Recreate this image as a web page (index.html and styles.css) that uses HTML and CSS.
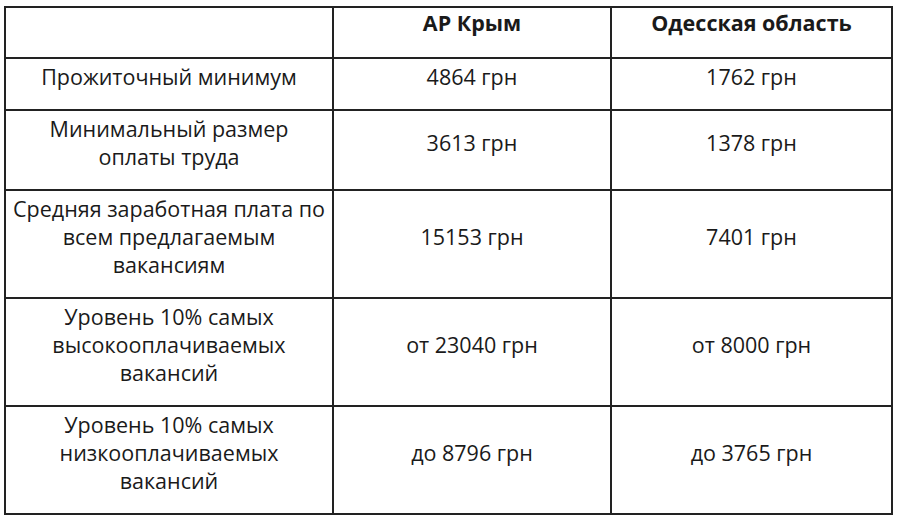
FILE: index.html
```html
<!DOCTYPE html>
<html lang="ru">
<head>
<meta charset="utf-8">
<link rel="stylesheet" href="styles.css">
</head>
<body>
<table class="data">
  <colgroup>
    <col class="c1"><col class="c2"><col class="c3">
  </colgroup>
  <thead>
    <tr class="head">
      <th></th>
      <th>АР Крым</th>
      <th>Одесская область</th>
    </tr>
  </thead>
  <tbody>
    <tr>
      <td>Прожиточный минимум</td>
      <td>4864 грн</td>
      <td>1762 грн</td>
    </tr>
    <tr>
      <td>Минимальный размер<br>оплаты труда</td>
      <td>3613 грн</td>
      <td>1378 грн</td>
    </tr>
    <tr>
      <td>Средняя заработная плата по<br>всем предлагаемым<br>вакансиям</td>
      <td>15153 грн</td>
      <td>7401 грн</td>
    </tr>
    <tr>
      <td>Уровень 10% самых<br>высокооплачиваемых<br>вакансий</td>
      <td>от 23040 грн</td>
      <td>от 8000 грн</td>
    </tr>
    <tr>
      <td>Уровень 10% самых<br>низкооплачиваемых<br>вакансий</td>
      <td>до 8796 грн</td>
      <td>до 3765 грн</td>
    </tr>
  </tbody>
</table>
</body>
</html>
```

FILE: styles.css
```css
html, body {
  margin: 0;
  padding: 0;
  background: #ffffff;
}

body {
  padding: 6px 0 0 4px;
  font-family: "Open Sans", "Noto Sans", sans-serif;
  color: #1a1a1a;
}

.data {
  border-collapse: collapse;
  table-layout: fixed;
  width: 889px;
  font-size: 21.5px;
  line-height: 28px;
}

.c1 { width: 328px; }
.c2 { width: 278px; }
.c3 { width: 281px; }

.data th,
.data td {
  border: 2px solid #222222;
  text-align: center;
  vertical-align: middle;
  padding: 4px 1px 18px;
}

.data th {
  font-weight: 700;
  vertical-align: top;
  padding: 1px 1px 0;
  height: 51px;
  box-sizing: border-box;
}
```
